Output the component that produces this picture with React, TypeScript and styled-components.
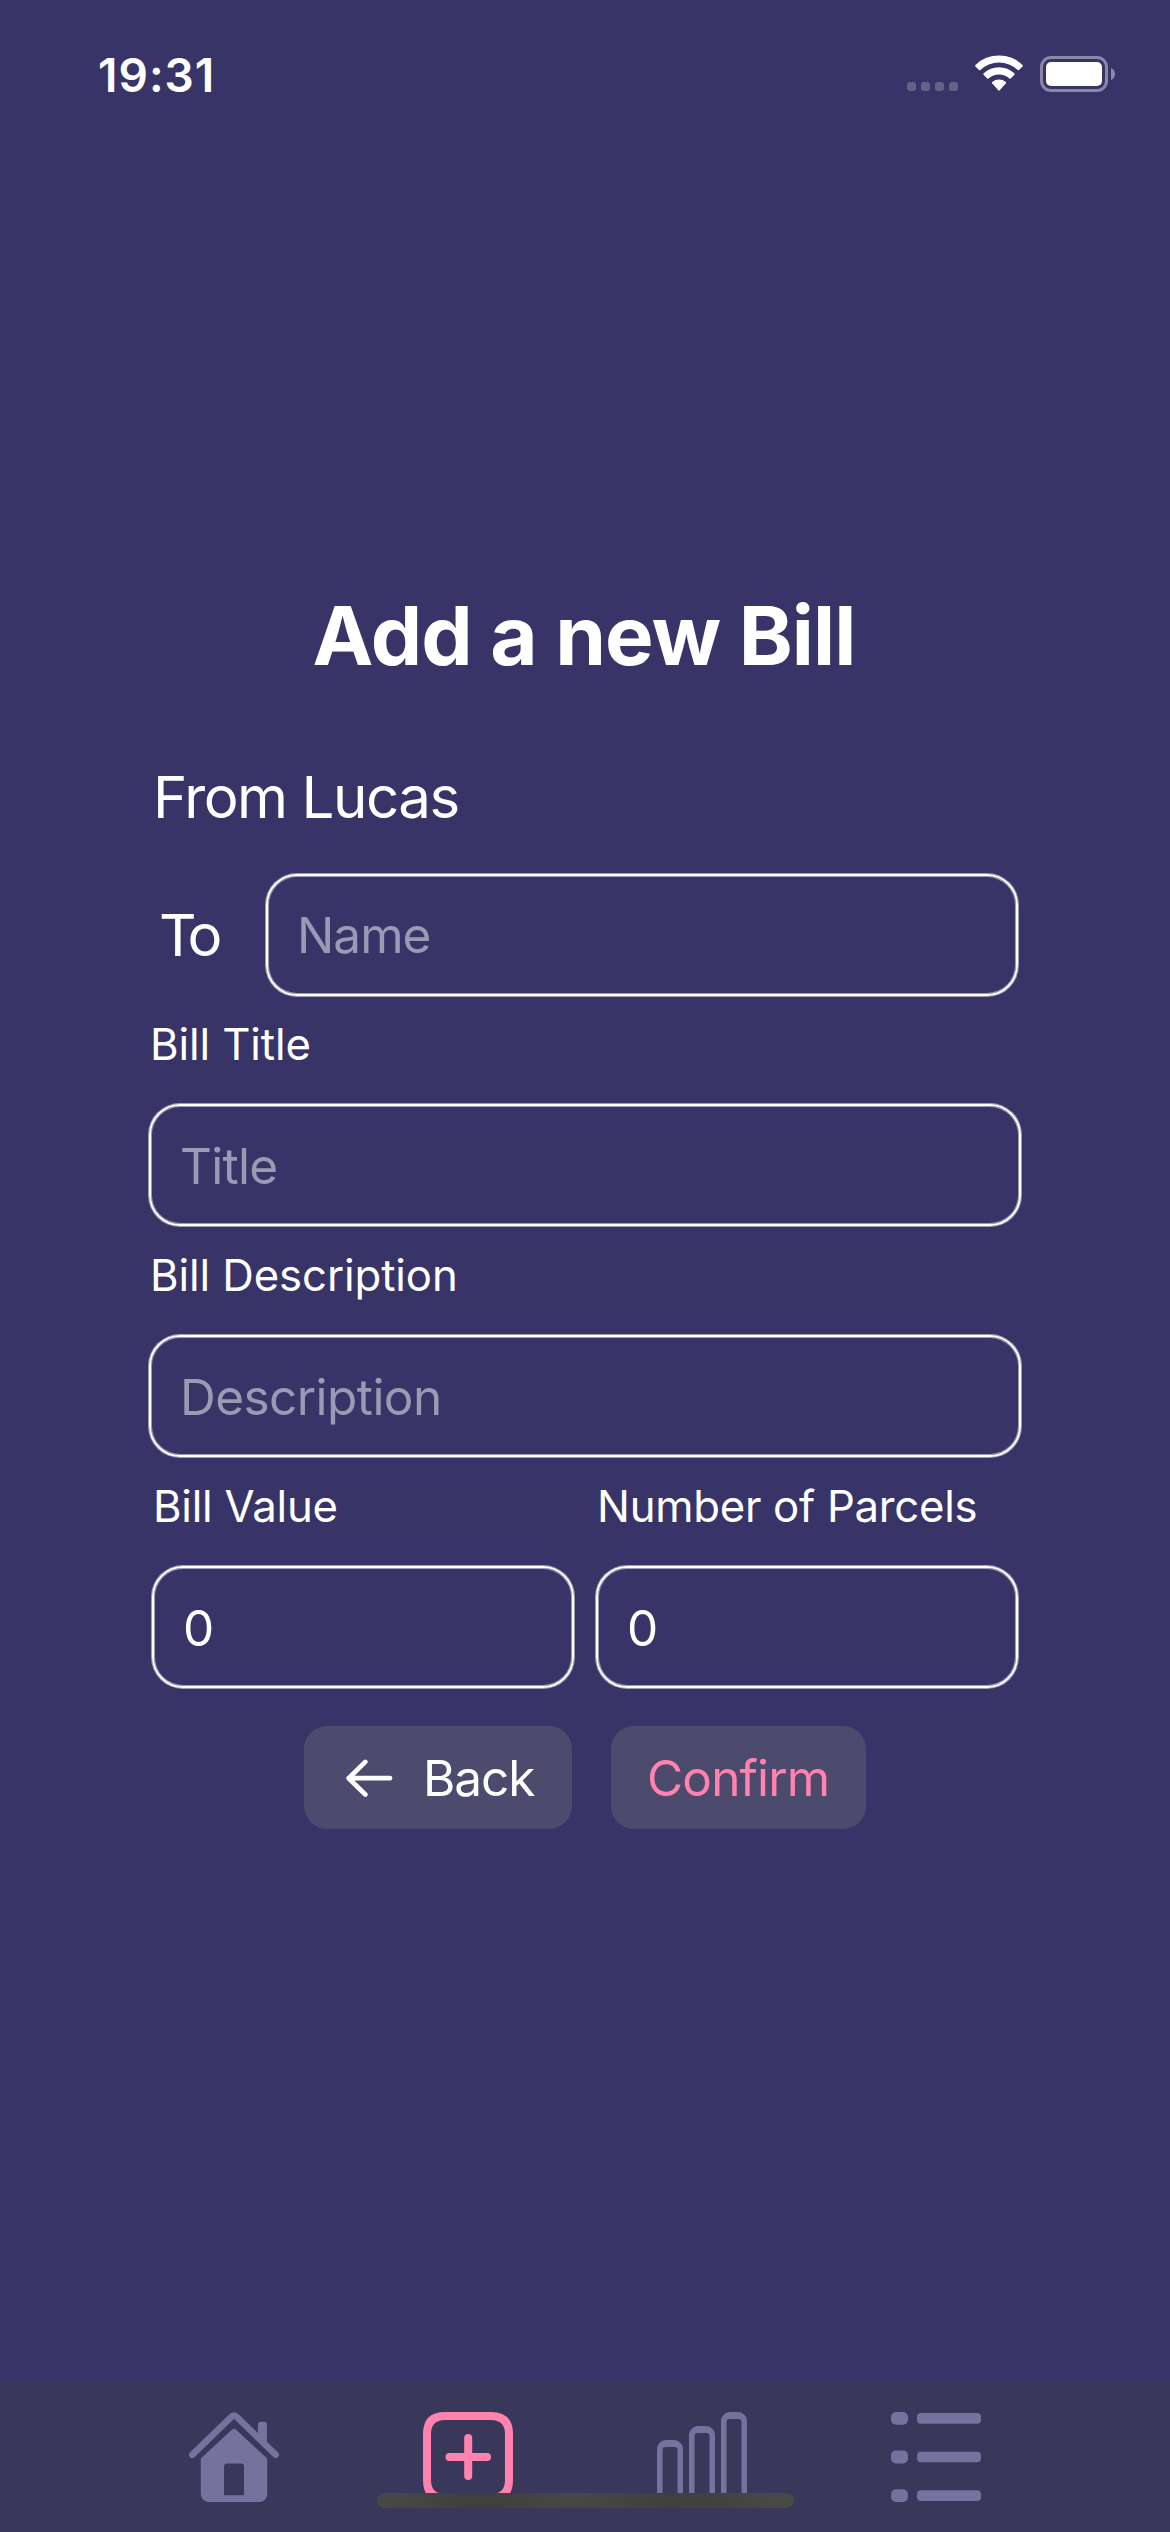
import React from "react";
import styled, { createGlobalStyle } from "styled-components";

const GlobalStyle = createGlobalStyle`
  *, *::before, *::after { box-sizing: border-box; }
  body {
    margin: 0;
    background: #383468;
    color: #fff;
    font-family: Inter, Roboto, "Liberation Sans", sans-serif;
  }
`;

const Screen = styled.div`
  width: 1170px;
  height: 2532px;
  display: flex;
  flex-direction: column;
  overflow: hidden;
  background: #383468;
`;

const StatusBar = styled.header`
  display: flex;
  justify-content: space-between;
  align-items: flex-start;
  height: 142px;
  padding: 49px 55px 0 98px;
`;

const Clock = styled.time`
  padding-top: 1px;
  font-size: 46px;
  line-height: 50px;
  font-weight: 600;
  letter-spacing: 1px;
`;

const StatusIcons = styled.div`
  display: flex;
  padding-top: 6px;
`;

const Dots = styled.div`
  display: flex;
  gap: 5px;
  padding-top: 27px;
  margin-right: 17px;
`;

const Dot = styled.span`
  width: 9px;
  height: 9px;
  border-radius: 3px;
  background: #65628a;
`;

const Battery = styled.div`
  display: flex;
  align-items: center;
  gap: 3px;
  height: 36px;
  margin: 1px 0 0 17px;
`;

const BatteryShell = styled.div`
  width: 68px;
  height: 36px;
  padding: 3px;
  border: 3px solid #8a88a9;
  border-radius: 11px;
`;

const BatteryLevel = styled.div`
  width: 56px;
  height: 24px;
  border-radius: 5px;
  background: #fff;
`;

const Form = styled.main`
  flex: 1;
  display: flex;
  flex-direction: column;
  padding: 438px 149px 0;
`;

const Title = styled.h1`
  margin: 0 0 69px;
  padding-right: 2px;
  font-size: 81.6px;
  line-height: 112px;
  font-weight: 700;
  letter-spacing: -0.87px;
  text-align: center;
  white-space: nowrap;
`;

const Sender = styled.p`
  margin: 0 0 41px;
  padding-left: 4px;
  font-size: 58.2px;
  line-height: 72px;
  letter-spacing: -1.46px;
`;

const RecipientRow = styled.div`
  display: flex;
  align-items: center;
  margin-bottom: -1px;
  padding: 0 3px 0 10px;
`;

const RecipientLabel = styled.label`
  flex: none;
  width: 107px;
  font-size: 58.2px;
  line-height: 72px;
  letter-spacing: -4.5px;
`;

const Input = styled.input<{ $tracking?: number }>`
  min-width: 0;
  width: 100%;
  height: 122px;
  padding: 2px 29px 0;
  border: 2px solid #fff;
  border-radius: 31px;
  outline: none;
  background: transparent;
  box-shadow: 0 0 0 1px rgba(255, 255, 255, 0.52), inset 0 0 0 1px rgba(255, 255, 255, 0.52);
  color: #fff;
  font-family: inherit;
  font-size: 49.5px;
  letter-spacing: ${(p) => p.$tracking ?? 0}px;

  &::placeholder {
    color: #9b99b3;
    opacity: 1;
  }
`;

const RecipientInput = styled(Input)`
  padding-top: 0;
`;

const Field = styled.div`
  display: flex;
  flex-direction: column;
  flex: 1 1 0;
  min-width: 0;
`;

const FieldBlock = styled(Field)`
  flex: none;
`;

const Label = styled.label<{ $tracking?: number }>`
  padding: 23px 0 33px 1px;
  font-size: 43.7px;
  line-height: 53px;
  letter-spacing: ${(p) => p.$tracking ?? -0.08}px;
  white-space: nowrap;
`;

const SplitRow = styled.div`
  display: flex;
  gap: 22px;
  padding: 0 3px;
`;

const Actions = styled.div`
  display: flex;
  justify-content: center;
  gap: 39px;
  margin-top: 38px;
`;

const Button = styled.button<{ $width: number; $inset: number; $accent?: boolean; $tracking: number }>`
  display: flex;
  align-items: center;
  width: ${(p) => p.$width}px;
  height: 103px;
  padding: 0 0 0 ${(p) => p.$inset}px;
  border: 0;
  border-radius: 23px;
  background: #4c4b6e;
  color: ${(p) => (p.$accent ? "#ff83ae" : "#fff")};
  font-family: inherit;
  font-size: 49.5px;
  letter-spacing: ${(p) => p.$tracking}px;
`;

const ArrowIcon = styled.svg`
  margin-right: 30px;
`;

const TabBar = styled.nav`
  position: relative;
  display: flex;
  height: 150px;
  padding: 30px 117px 0;
  background: #3a385a;
`;

const Tab = styled.a<{ $active?: boolean }>`
  flex: 1;
  display: flex;
  justify-content: center;
  color: ${(p) => (p.$active ? "#ff83ae" : "#75729d")};
`;

const HomeIndicator = styled.div`
  position: absolute;
  left: 377px;
  top: 111px;
  width: 417px;
  height: 15px;
  border-radius: 8px;
  background: linear-gradient(90deg, #484848 0%, #464646 8%, #404040 20%, #404040 30%, #474747 46%, #464646 52%, #404040 68%, #414141 80%, #484848 94%);
`;

const BarColumn = ({ x, y }: { x: number; y: number }) => (
  <path
    fillRule="evenodd"
    d={`M${x} 90V${y + 9}a9 9 0 0 1 9-9h8a9 9 0 0 1 9 9V90zM${x + 5.5} 84h15V${y + 10}a3 3 0 0 0-3-3h-9a3 3 0 0 0-3 3z`}
  />
);

const HomeTabIcon = () => (
  <svg width="90" height="90" viewBox="0 0 90 90" fill="currentColor">
    <path d="M3.2 42.8 42.6 4.7Q45 2.6 47.4 4.7L86.8 42.8" fill="none" stroke="currentColor" strokeWidth="6.5" strokeLinecap="round" strokeLinejoin="round" />
    <path d="M69 27V12.8a3 3 0 0 1 3-3h3a3 3 0 0 1 3 3V31.5z" />
    <path fillRule="evenodd" d="M11.8 46.5 42.8 17.8Q45 15.9 47.2 17.8L78.2 46.5V82a8 8 0 0 1-8 8H19.8a8 8 0 0 1-8-8zM35 83.3H55V54.5a3 3 0 0 0-3-3H38a3 3 0 0 0-3 3z" />
  </svg>
);

const AddTabIcon = () => (
  <svg width="90" height="90" viewBox="0 0 90 90" fill="none" stroke="currentColor" strokeWidth="8" strokeLinecap="round">
    <path d="M22 4H68C80 4 86 10 86 22V68C86 80 80 86 68 86H22C10 86 4 80 4 68V22C4 10 10 4 22 4Z" />
    <path d="M26.5 45H64M45.2 26V64" />
  </svg>
);

const ChartTabIcon = () => (
  <svg width="90" height="90" viewBox="0 0 90 90" fill="currentColor">
    <BarColumn x={0} y={28} />
    <BarColumn x={32} y={14} />
    <BarColumn x={64} y={0} />
  </svg>
);

const ListTabIcon = () => (
  <svg width="90" height="90" viewBox="0 0 90 90" fill="currentColor">
    {[0, 38.6, 77.2].map((y) => (
      <g key={y}>
        <rect x="0" y={y} width="17" height="12.8" rx="5" />
        <rect x="26" y={y + 1.1} width="64" height="10.6" rx="4" />
      </g>
    ))}
  </svg>
);

export default function App() {
  return (
    <>
      <GlobalStyle />
      <Screen>
        <StatusBar>
          <Clock>19:31</Clock>
          <StatusIcons>
            <Dots>
              <Dot />
              <Dot />
              <Dot />
              <Dot />
            </Dots>
            <svg width="48" height="36" viewBox="0 0 48 36" fill="#fff">
              <path d="M.5 11.4Q-.3 10.6.5 9.9A33.8 33.8 0 0 1 47.5 9.9Q48.3 10.6 47.5 11.4L44 15Q43.4 15.6 42.7 15A27 27 0 0 0 5.3 15Q4.6 15.6 4 15Z" />
              <path d="M8.6 19.7Q7.9 19 8.7 18.3A22.3 22.3 0 0 1 39.3 18.3Q40.1 19 39.4 19.7L35.8 23.4Q35.2 24 34.5 23.4A15.8 15.8 0 0 0 13.5 23.4Q12.8 24 12.2 23.4Z" />
              <path d="M17.1 28.3Q16.5 27.6 17.2 27A10.7 10.7 0 0 1 30.8 27Q31.5 27.6 30.9 28.3L24.7 35.3Q24 36 23.3 35.3Z" />
            </svg>
            <Battery>
              <BatteryShell>
                <BatteryLevel />
              </BatteryShell>
              <svg width="4" height="12" viewBox="0 0 4 12">
                <path d="M0 0Q4 1.5 4 6T0 12Z" fill="#8a88a9" />
              </svg>
            </Battery>
          </StatusIcons>
        </StatusBar>

        <Form>
          <Title>Add a new Bill</Title>
          <Sender>From Lucas</Sender>
          <RecipientRow>
            <RecipientLabel htmlFor="name">To</RecipientLabel>
            <RecipientInput id="name" placeholder="Name" $tracking={-0.98} />
          </RecipientRow>
          <FieldBlock>
            <Label htmlFor="title">Bill Title</Label>
            <Input id="title" placeholder="Title" $tracking={-0.71} />
          </FieldBlock>
          <FieldBlock>
            <Label htmlFor="description">Bill Description</Label>
            <Input id="description" placeholder="Description" $tracking={-0.56} />
          </FieldBlock>
          <SplitRow>
            <Field>
              <Label htmlFor="value" $tracking={-0.22}>Bill Value</Label>
              <Input id="value" defaultValue="0" />
            </Field>
            <Field>
              <Label htmlFor="parcels" $tracking={-0.27}>Number of Parcels</Label>
              <Input id="parcels" defaultValue="0" />
            </Field>
          </SplitRow>
          <Actions>
            <Button type="button" $width={268} $inset={42} $tracking={-1.05}>
              <ArrowIcon width="47" height="38" viewBox="0 0 47 38" fill="none" stroke="#fff" strokeWidth="4.7" strokeLinecap="round" strokeLinejoin="round">
                <path d="M44 19.2H3M19.3 2.9 2.7 19.2 19.3 35.5" />
              </ArrowIcon>
              Back
            </Button>
            <Button type="button" $width={255} $inset={36} $tracking={-0.85} $accent>
              Confirm
            </Button>
          </Actions>
        </Form>

        <TabBar>
          <Tab><HomeTabIcon /></Tab>
          <Tab $active><AddTabIcon /></Tab>
          <Tab><ChartTabIcon /></Tab>
          <Tab><ListTabIcon /></Tab>
          <HomeIndicator />
        </TabBar>
      </Screen>
    </>
  );
}
